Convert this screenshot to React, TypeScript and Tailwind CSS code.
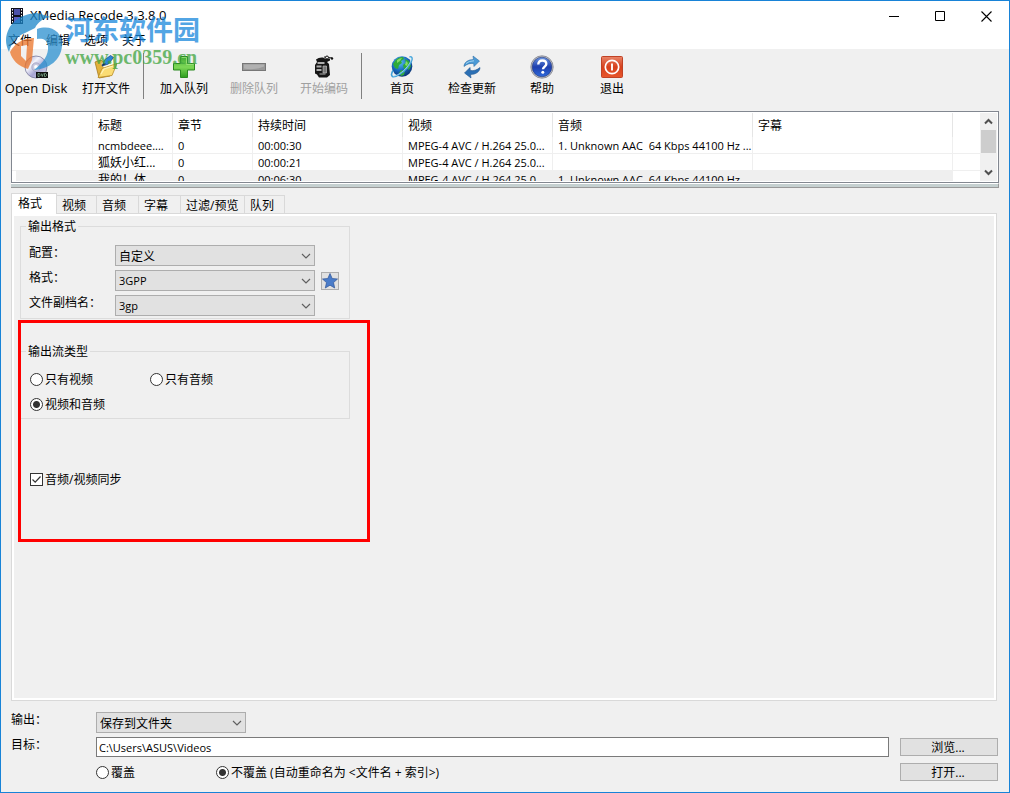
import { useState } from 'react';
import type { ReactNode } from 'react';

interface ToolItem {
  label: string;
  icon: ReactNode;
  disabled?: boolean;
}

interface MediaRow {
  title: string;
  chapter: string;
  duration: string;
  video: string;
  audio: string;
}

const DiscIcon = () => (
  <svg width="24" height="24" viewBox="0 0 24 24">
    <defs>
      <linearGradient id="disc" x1="0" y1="0" x2="1" y2="1">
        <stop offset="0" stopColor="#8e93c4" />
        <stop offset="0.35" stopColor="#f4f4fb" />
        <stop offset="0.6" stopColor="#a6a4d2" />
        <stop offset="1" stopColor="#e9e8f5" />
      </linearGradient>
    </defs>
    <circle cx="12" cy="12" r="11" fill="url(#disc)" stroke="#77789c" strokeWidth="0.8" />
    <circle cx="12" cy="12" r="4.2" fill="#c9c9de" stroke="#8f90b5" strokeWidth="0.6" />
    <circle cx="12" cy="12" r="1.9" fill="#fff" />
    <rect x="12" y="17" width="12" height="6" fill="#111" />
    <path d="M14 18.500v3h1.200l.8-.8v-1.400l-.8-.8zM17.300 18.500l1 3 1-3M20.500 18.500v3h1.200l.8-.8v-1.400l-.8-.8z" fill="none" stroke="#8fc7a0" strokeWidth="0.7" />
  </svg>
);

const FolderIcon = () => (
  <svg width="24" height="24" viewBox="0 0 24 24">
    <path d="M1 7l6-2 2 2 9-1 1 3-3 12-11 2z" fill="#e2b23c" stroke="#a87a1d" strokeWidth="0.8" />
    <path d="M7 8L19 3l2 8-8 8z" fill="#fffbe8" stroke="#b6a067" strokeWidth="0.6" />
    <path d="M4 22.500l4-9 15-5-5 12z" fill="#fbdc73" stroke="#b98b26" strokeWidth="0.8" />
    <path d="M7 19l3-5 9-3" fill="none" stroke="#fff2b8" strokeWidth="1.2" />
    <path d="M8 11l2.500-6 6-4.500 3 2-5 6.500z" fill="#2c86d6" stroke="#164a86" strokeWidth="0.8" />
    <path d="M8 11l1.600-3.500L12 9z" fill="#1c2f4c" />
  </svg>
);

const PlusIcon = () => (
  <svg width="24" height="24" viewBox="0 0 24 24">
    <defs>
      <linearGradient id="plus" x1="0" y1="0" x2="0" y2="1">
        <stop offset="0" stopColor="#3da632" />
        <stop offset="0.5" stopColor="#7ed857" />
        <stop offset="1" stopColor="#2c9c1e" />
      </linearGradient>
    </defs>
    <path d="M8.500 1.500h7v7h7v6.500h-7v7.500h-7V15h-7V8.500h7z" fill="url(#plus)" stroke="#2b8a20" />
    <path d="M9.500 2.500h5v7h7" fill="none" stroke="#a2e482" strokeWidth="0.8" />
  </svg>
);

const MinusIcon = () => (
  <svg width="24" height="24" viewBox="0 0 24 24">
    <rect x="0.5" y="8.5" width="23" height="7" fill="#999" stroke="#777" />
    <path d="M2 9.500h20v2q-10 4-20 2z" fill="#b1b1b1" />
  </svg>
);

const EncodeIcon = () => (
  <svg width="24" height="24" viewBox="0 0 24 24">
    <path d="M4 4.500q3-2.500 7-2l3 1.500 4-.5v2l-3 1.500 2 2 1 11-3 2.500H7l-2-3-2-1V10l2-3z" fill="#151515" />
    <path d="M5.500 8h7" stroke="#d5d5d5" strokeWidth="1.6" />
    <path d="M4.500 11.500h5M4.500 15h5" stroke="#aaa" strokeWidth="2.2" />
    <path d="M11 11h3.500v7H11z" fill="#777" stroke="#bbb" strokeWidth="0.7" />
    <path d="M7.500 19h6" stroke="#999" strokeWidth="1.2" />
    <path d="M12 2l8 1" stroke="#111" strokeWidth="1.2" />
    <circle cx="15" cy="2.5" r="1.5" fill="#eee" stroke="#111" />
    <circle cx="20" cy="3.5" r="1.2" fill="#111" />
  </svg>
);

const GlobeIcon = () => (
  <svg width="24" height="24" viewBox="0 0 24 24">
    <defs>
      <radialGradient id="globe" cx="0.4" cy="0.3" r="0.8">
        <stop offset="0" stopColor="#5ac0ef" />
        <stop offset="0.5" stopColor="#1769bd" />
        <stop offset="1" stopColor="#06245f" />
      </radialGradient>
    </defs>
    <circle cx="12" cy="11.5" r="10.3" fill="url(#globe)" />
    <path d="M5 6q3-4 8-4l1 2-3 2 1 2-3 2-1 4-3-1-2-4zM15 4l4 2 2 5-2 4-3-2-2 1-1-4 3-2zM11 15l4 1-1 4-3 1-2-3z" fill="#2faa38" />
    <path d="M7 5q3-2 5-2l-2 3-3 2zM16 6l2 2-1 3-2-1z" fill="#83db64" />
    <path d="M19.500 2c4-1 3 4.500-1.500 10S5 23 2.500 21.500C1 20.500 1.500 18 3 15.500" fill="none" stroke="#3fa0d8" strokeWidth="1.6" />
    <path d="M20 2c2.500.5 1 5-3 10S6 21.500 3 21" fill="none" stroke="#bfe9fa" strokeWidth="0.7" />
  </svg>
);

const RefreshIcon = () => (
  <svg width="24" height="24" viewBox="0 0 24 24">
    <path d="M4 11.500c0-4 4-7 9.500-7L13 1l6.500 5L14 11.500 13.700 8.500C10 8 7 9 4 11.500z" fill="#4b9ad6" stroke="#2c6ea8" strokeWidth="0.6" />
    <path d="M20 12.500c0 4-4 7-9.500 7l.5 3.500-6.500-5 5.500-5.500.3 3c3.700.5 6.700-.5 9.700-3z" fill="#2b6fb4" stroke="#1e5590" strokeWidth="0.6" />
    <path d="M6 8.500q3-2.700 8-2.700" fill="none" stroke="#a4d4f0" strokeWidth="1" />
  </svg>
);

const HelpIcon = () => (
  <svg width="24" height="24" viewBox="0 0 24 24">
    <defs>
      <linearGradient id="help" x1="0" y1="0" x2="0" y2="1">
        <stop offset="0" stopColor="#6c97e3" />
        <stop offset="0.5" stopColor="#1e3fae" />
        <stop offset="1" stopColor="#2f6adb" />
      </linearGradient>
    </defs>
    <circle cx="12" cy="12" r="11.2" fill="#c3c4cb" stroke="#7f828c" strokeWidth="0.8" />
    <circle cx="12" cy="12" r="9.8" fill="url(#help)" stroke="#1c3275" strokeWidth="0.6" />
    <path d="M8.300 9.500q0-4 4-4t4 3.500c0 2.500-3.300 2.700-3.300 5.300" fill="none" stroke="#fff" strokeWidth="2.4" />
    <circle cx="12.8" cy="17.3" r="1.5" fill="#fff" />
  </svg>
);

const ExitIcon = () => (
  <svg width="24" height="24" viewBox="0 0 24 24">
    <defs>
      <linearGradient id="exit" x1="0" y1="0" x2="0" y2="1">
        <stop offset="0" stopColor="#e98468" />
        <stop offset="0.5" stopColor="#d6411d" />
        <stop offset="1" stopColor="#e8562c" />
      </linearGradient>
    </defs>
    <rect x="1.5" y="1.5" width="21" height="21" rx="1" fill="url(#exit)" stroke="#c04225" />
    <circle cx="12" cy="12" r="6.7" fill="none" stroke="#fff" strokeWidth="1.7" />
    <path d="M12 8.500v7" stroke="#fff" strokeWidth="1.9" />
  </svg>
);

const FilmIcon = () => (
  <svg width="12" height="16" viewBox="0 0 12 16">
    <rect width="12" height="16" fill="#10101c" />
    <rect x="3" y="1" width="6" height="6" fill="#4c50a8" />
    <rect x="3" y="9" width="6" height="6" fill="#5c60c2" />
    <path d="M1.500 1v14M10.500 1v14" stroke="#fff" strokeDasharray="1.5 1.5" />
  </svg>
);

// Site mark laid over the top left corner of the window
const Watermark = () => (
  <div className="pointer-events-none absolute top-2 left-1 flex items-start gap-0.5 opacity-75" aria-hidden="true">
    <svg width="58" height="62" viewBox="0 0 58 62">
      <path d="M1 31C2 15 14 5 32 4l14 4c-8 1-13 5-16 11l-10 5C12 27 6 34 4 43 2 39 1 35 1 31z" fill="#1b86c9" />
      <path d="M5 43c5-9 13-14 24-14l-2 22-4 9C13 57 7 51 5 43z" fill="#ec7428" />
      <path d="M22 36l-1 16-5-5V37z" fill="#f0f0f0" />
      <path d="M32 20c14-5 26 3 25 17-1 14-13 23-28 24 9-7 15-15 14-24-1-7-6-8-11-7z" fill="#2a90d0" />
    </svg>
    <div className="whitespace-nowrap">
      <div className="pt-0.5 font-['Noto_Sans_CJK_SC',sans-serif] text-[27px] leading-9 font-bold text-[#1987dc]">河东软件园</div>
      <div className="font-['Liberation_Serif',serif] text-xl leading-5 font-bold text-[#41a53f]">www.pc0359.cn</div>
    </div>
  </div>
);

const menus = ['文件', '编辑', '选项', '关于'];

const toolGroups: ToolItem[][] = [
  [
    { label: 'Open Disk', icon: <DiscIcon /> },
    { label: '打开文件', icon: <FolderIcon /> },
  ],
  [
    { label: '加入队列', icon: <PlusIcon /> },
    { label: '删除队列', icon: <MinusIcon />, disabled: true },
    { label: '开始编码', icon: <EncodeIcon />, disabled: true },
  ],
  [
    { label: '首页', icon: <GlobeIcon /> },
    { label: '检查更新', icon: <RefreshIcon /> },
    { label: '帮助', icon: <HelpIcon /> },
    { label: '退出', icon: <ExitIcon /> },
  ],
];

const columns = [
  { label: '', width: 'w-[81px]' },
  { label: '标题', width: 'w-[80px]' },
  { label: '章节', width: 'w-[80px]' },
  { label: '持续时间', width: 'w-[150px]' },
  { label: '视频', width: 'w-[150px]' },
  { label: '音频', width: 'w-[200px]' },
  { label: '字幕', width: 'w-[200px]' },
];

const rows: MediaRow[] = [
  { title: 'ncmbdeee....', chapter: '0', duration: '00:00:30', video: 'MPEG-4 AVC / H.264 25.0...', audio: '1. Unknown AAC  64 Kbps 44100 Hz ...' },
  { title: '狐妖小红...', chapter: '0', duration: '00:00:21', video: 'MPEG-4 AVC / H.264 25.0...', audio: '' },
  { title: '我的！体...', chapter: '0', duration: '00:06:30', video: 'MPEG-4 AVC / H.264 25.0...', audio: '1. Unknown AAC  64 Kbps 44100 Hz ...' },
];

const tabs = [
  { label: '格式', width: 'w-[46px]' },
  { label: '视频', width: 'w-[40px]' },
  { label: '音频', width: 'w-[42px]' },
  { label: '字幕', width: 'w-[42px]' },
  { label: '过滤/预览', width: 'w-[64px]' },
  { label: '队列', width: 'w-[40px]' },
];

const ToolBar = () => (
  <div className="flex pt-1 pb-3" role="toolbar">
    {toolGroups.map((group, index) => (
      <div key={index} className="flex">
        {index > 0 && (
          <div className="flex h-[46px] w-2 pl-0.5">
            <div className="w-px bg-[#808080]" />
          </div>
        )}
        {group.map((item) => (
          <button
            key={item.label}
            type="button"
            disabled={item.disabled}
            className="flex h-[46px] w-[70px] flex-col items-center pt-0.5 whitespace-nowrap disabled:text-[#a0a0a0]"
          >
            {item.icon}
            <span className={item.label === 'Open Disk' ? 'text-[13px] leading-[18px]' : 'leading-5'}>{item.label}</span>
          </button>
        ))}
      </div>
    ))}
  </div>
);

const MediaTable = () => (
  <div className="mx-2.5 flex h-[72px] border border-[#828790] bg-white p-px pl-0">
    <div className="min-w-0 flex-1 overflow-hidden">
      <table className="w-full table-fixed border-separate border-spacing-0 text-left">
        <thead>
          <tr>
            {columns.map((column, index) => (
              <th key={index} className={`h-6 border-r border-[#e5e5e5] p-0 pt-0.5 pl-[5px] font-normal ${column.width}`}>
                {column.label}
              </th>
            ))}
            <th />
          </tr>
        </thead>
        <tbody className="text-[11px]">
          {rows.map((row, index) => {
            const cell = `h-[17px] overflow-hidden border-r border-b border-[#efefef] p-0 pt-0.5 pl-[5px] leading-[14px] whitespace-pre ${index === 2 ? 'bg-[#efefef]' : ''}`;
            return (
              <tr key={index}>
                <td className={index === 2 ? `${cell} border-l-4 border-l-white` : cell} />
                <td className={index === 0 ? cell : `${cell} text-xs`}>
                  <div className="leading-[14px]">{row.title}</div>
                </td>
                <td className={cell}>{row.chapter}</td>
                <td className={cell}>{row.duration}</td>
                <td className={cell}>{row.video}</td>
                <td className={cell}>{row.audio}</td>
                <td className={cell} />
                <td className="border-b border-[#efefef]" />
              </tr>
            );
          })}
        </tbody>
      </table>
    </div>
    <div className="flex w-[17px] flex-col items-center bg-[#f0f0f0]">
      <svg width="17" height="17" viewBox="0 0 17 17">
        <path d="M5 10.500L8.500 7l3.500 3.500" fill="none" stroke="#505050" strokeWidth="2" />
      </svg>
      <div className="h-[23px] w-[15px] bg-[#cdcdcd]" />
      <svg className="mt-auto" width="17" height="17" viewBox="0 0 17 17">
        <path d="M5 6.500L8.500 10 12 6.500" fill="none" stroke="#505050" strokeWidth="2" />
      </svg>
    </div>
  </div>
);

interface ComboProps {
  id: string;
  value: string;
  width: string;
  latin?: boolean;
}

const Combo: React.FC<ComboProps> = ({ id, value, width, latin }) => (
  <div className={`relative ${width}`}>
    <select
      id={id}
      className={`block h-[21px] w-full appearance-none border border-[#adadad] bg-[#e1e1e1] pt-0.5 pl-[3px] ${latin ? 'text-[11px]' : ''}`}
    >
      <option>{value}</option>
    </select>
    <svg className="pointer-events-none absolute top-2 right-1" width="10" height="7" viewBox="0 0 10 7">
      <path d="M1 1l4 4 4-4" fill="none" stroke="#606060" strokeWidth="1.2" />
    </svg>
  </div>
);

interface RadioProps {
  name: string;
  label: string;
  height: string;
  checked?: boolean;
}

const Radio: React.FC<RadioProps> = ({ name, label, height, checked }) => (
  <label className={`flex items-center gap-0.5 ${height}`}>
    <input
      type="radio"
      name={name}
      defaultChecked={checked}
      className="h-[13px] w-[13px] appearance-none rounded-full border border-[#333] bg-white checked:bg-[radial-gradient(circle,#333_0_3px,#fff_4px)]"
    />
    <span className="pt-px">{label}</span>
  </label>
);

const FormatPanel = () => (
  <div className="pt-px pl-1.5">
    <fieldset className="w-[330px] border border-[#dcdcdc]">
      <legend className="ml-[5px] px-0.5 pt-0.5 leading-4">输出格式</legend>
      <div className="flex flex-col gap-1 px-2 pt-2.5 pb-0.5">
        <div className="flex">
          <label htmlFor="profile" className="w-[86px] leading-4">配置：</label>
          <Combo id="profile" value="自定义" width="w-[200px]" />
        </div>
        <div className="flex">
          <label htmlFor="format" className="w-[86px] leading-4">格式：</label>
          <Combo id="format" value="3GPP" width="w-[200px]" latin />
          <button type="button" aria-label="收藏" className="ml-1.5 flex h-[18px] w-[18px] items-center justify-center self-center border border-[#adadad] bg-[#e1e1e1]">
            <svg className="shrink-0" width="16" height="16" viewBox="0 0 16 16">
              <path d="M8 .5l2.200 5 5.300.5-4 3.600 1.200 5.400L8 12.200 3.300 15l1.200-5.400-4-3.600 5.300-.5z" fill="#4a7cc9" stroke="#2f5597" strokeWidth="0.7" />
            </svg>
          </button>
        </div>
        <div className="flex">
          <label htmlFor="extension" className="w-[86px] leading-4">文件副档名：</label>
          <Combo id="extension" value="3gp" width="w-[200px]" latin />
        </div>
      </div>
    </fieldset>

    <div className="relative mt-[23px]">
      <fieldset className="w-[330px] border border-[#dcdcdc]">
        <legend className="ml-[5px] px-0.5 pt-0.5 leading-4">输出流类型</legend>
        <div className="grid grid-cols-[120px_120px] px-[9px] pt-[7px] pb-px">
          <Radio name="stream" label="只有视频" height="h-[25px]" />
          <Radio name="stream" label="只有音频" height="h-[25px]" />
          <Radio name="stream" label="视频和音频" height="h-[25px]" checked />
        </div>
      </fieldset>
      <label className="mt-12 ml-2.5 flex h-[25px] items-center gap-0.5">
        <span className="relative flex">
          <input type="checkbox" defaultChecked className="peer h-[13px] w-[13px] appearance-none border border-[#333] bg-white" />
          <svg className="pointer-events-none absolute inset-0 hidden peer-checked:block" width="13" height="13" viewBox="0 0 13 13">
            <path d="M2.500 6.500l2.700 2.700 5.300-5.700" fill="none" stroke="#333" strokeWidth="1.2" />
          </svg>
        </span>
        <span className="pt-px">音频/视频同步</span>
      </label>
      {/* Highlight frame */}
      <div className="pointer-events-none absolute -top-[22px] -left-0.5 h-[222px] w-[352px] border-3 border-[#ff0000]" />
    </div>
  </div>
);

const OutputBar = () => (
  <div className="grid grid-cols-[85px_1fr_98px] pt-[11px] pr-[11px] pb-2.5 pl-2.5">
    <label htmlFor="output" className="h-[25px] leading-4">输出：</label>
    <Combo id="output" value="保存到文件夹" width="w-[150px]" />
    <span />
    <label htmlFor="target" className="h-[25px] leading-4">目标：</label>
    <div className="pr-[11px]">
      <input id="target" type="text" defaultValue="C:\Users\ASUS\Videos" className="block h-5 w-full border border-[#7a7a7a] bg-white px-0.5 text-[11px]" />
    </div>
    <button type="button" className="mt-px h-[18px] border border-[#adadad] bg-[#e1e1e1] pr-0.5 leading-[18px]">浏览...</button>
    <span />
    <div className="grid grid-cols-[120px_1fr]">
      <Radio name="overwrite" label="覆盖" height="h-5" />
      <Radio name="overwrite" label="不覆盖 (自动重命名为 <文件名 + 索引>)" height="h-5" checked />
    </div>
    <button type="button" className="mt-px h-[18px] border border-[#adadad] bg-[#e1e1e1] pr-0.5 leading-[18px]">打开...</button>
  </div>
);

const App: React.FC = () => {
  const [activeTab, setActiveTab] = useState('格式');

  return (
    <div className="relative flex min-h-screen flex-col border border-[#1883d7] bg-[#f0f0f0] font-['Open_Sans','Noto_Sans_CJK_SC',sans-serif] text-xs text-black">
      <header className="bg-white">
        <div className="flex h-[30px] items-center pl-2.5">
          <FilmIcon />
          <h1 className="flex-1 pl-[7px] text-[13px]">XMedia Recode 3.3.8.0</h1>
          <button type="button" aria-label="最小化" className="flex w-[46px] justify-center">
            <svg width="11" height="11" viewBox="0 0 11 11">
              <path d="M0 5.500h10" stroke="#000" />
            </svg>
          </button>
          <button type="button" aria-label="最大化" className="flex w-[46px] justify-center">
            <svg width="11" height="11" viewBox="0 0 11 11">
              <path d="M.5.500h9v9h-9z" fill="none" stroke="#000" />
            </svg>
          </button>
          <button type="button" aria-label="关闭" className="flex w-[46px] justify-center">
            <svg width="11" height="11" viewBox="0 0 11 11">
              <path d="M.5.500l10 10M10.500.500l-10 10" stroke="#000" strokeWidth="1.1" />
            </svg>
          </button>
        </div>
        <nav className="flex h-[18px] items-center gap-3.5 pt-0.5 pl-[7px]">
          {menus.map((menu) => (
            <button key={menu} type="button" className="leading-4">{menu}</button>
          ))}
        </nav>
      </header>

      <ToolBar />
      <MediaTable />
      <div className="mx-2.5 h-[5px] border-t border-r border-b border-t-white border-r-[#999] border-b-[#999] bg-[#c5d0d0]" />

      <div className="mt-[5px] ml-2.5 flex h-5 items-end" role="tablist">
        {tabs.map((tab) => (
          <button
            key={tab.label}
            type="button"
            role="tab"
            aria-selected={activeTab === tab.label}
            onClick={() => setActiveTab(tab.label)}
            className={
              activeTab === tab.label
                ? `z-10 -mb-px h-[21px] border border-b-0 border-[#d9d9d9] bg-white pl-1.5 text-left leading-[18px] whitespace-nowrap ${tab.width}`
                : `h-[18px] border-t border-r border-[#d9d9d9] pl-[5px] text-left leading-5 whitespace-nowrap ${tab.width}`
            }
          >
            {tab.label}
          </button>
        ))}
      </div>
      <main className="mr-3 ml-2.5 flex flex-1 flex-col border border-[#d9d9d9]">
        <div className="flex-1 border-2 border-white">
          <FormatPanel />
        </div>
      </main>

      <OutputBar />
      <Watermark />
    </div>
  );
};

export default App;
